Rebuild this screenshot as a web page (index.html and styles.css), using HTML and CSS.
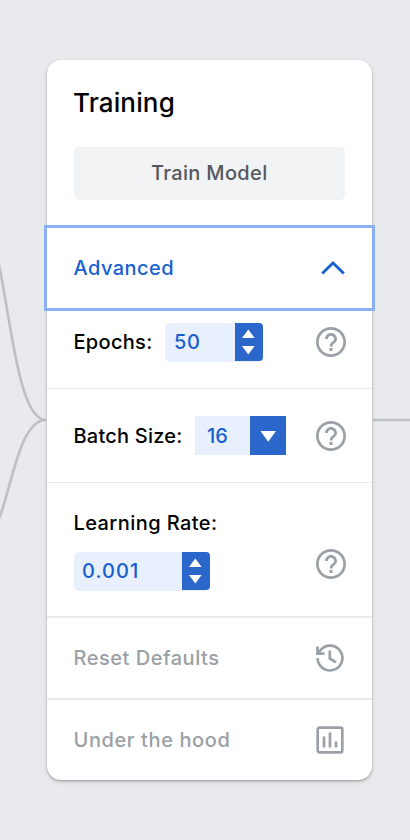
FILE: index.html
```html
<!DOCTYPE html>
<html lang="en">
<head>
<meta charset="utf-8">
<title>Training</title>
<link rel="stylesheet" href="styles.css">
</head>
<body>
<svg class="wires" viewBox="0 0 410 840" aria-hidden="true">
  <path d="M-4 250L0 270C12 330 20 420 46 420M46 420C20 420 12 485 0 516L-4 526M373 420H410"/>
</svg>
<svg class="defs" aria-hidden="true">
  <symbol id="help" viewBox="0 0 24 24"><path d="M11 18h2v-2h-2v2zm1-16C6.480 2 2 6.480 2 12s4.480 10 10 10 10-4.480 10-10S17.520 2 12 2zm0 18.200c-4.520 0-8.200-3.680-8.200-8.200S7.480 3.800 12 3.800s8.200 3.680 8.200 8.200-3.680 8.200-8.200 8.200zM12 6c-2.210 0-4 1.790-4 4h1.900c0-1.100.95-2.100 2.100-2.100s2.100 1 2.100 2.100c0 2-3 1.750-3 5h1.900c0-2.250 3-2.500 3-5 0-2.210-1.790-4-4-4z"/></symbol>
</svg>
<main class="card">
  <section class="head">
    <h1 class="title">Training</h1>
    <button class="train"><span>Train Model</span></button>
  </section>
  <section class="advanced">
    <span class="t-advanced">Advanced</span>
    <svg class="chevron" viewBox="0 0 24 14"><path d="M1.200 12.500L12 2L22.800 12.500"/></svg>
  </section>
  <section class="row epochs">
    <label class="t-epochs">Epochs:</label>
    <div class="field field-epochs"><span class="t-50">50</span>
      <svg class="stepper" viewBox="0 0 28 38"><path d="M7 15L13.300 6.500L19.600 15zM7 23L13.300 31.500L19.600 23z"/></svg>
    </div>
    <svg class="help"><use href="#help"/></svg>
  </section>
  <section class="row batch">
    <label class="t-batch">Batch Size:</label>
    <div class="field field-batch"><span class="t-16">16</span>
      <svg class="drop" viewBox="0 0 36 39"><path d="M10.500 15H26L18.200 25.800z"/></svg>
    </div>
    <svg class="help"><use href="#help"/></svg>
  </section>
  <section class="row rate">
    <div class="stack">
      <label class="t-rate">Learning Rate:</label>
      <div class="field field-rate"><span class="t-001">0.001</span>
        <svg class="stepper" viewBox="0 0 28 38"><path d="M7 15L13.300 6.500L19.600 15zM7 23L13.300 31.500L19.600 23z"/></svg>
      </div>
    </div>
    <svg class="help"><use href="#help"/></svg>
  </section>
  <section class="row link reset">
    <span class="t-reset">Reset Defaults</span>
    <svg class="icon" viewBox="0 0 30 30"><path d="M2.600 15A12.400 12.400 0 1 0 5 7.700L2.500 10.600M2.500 3.500V10.700H9.500M14.800 7.500V15.500L21 19.300"/></svg>
  </section>
  <section class="row link hood">
    <span class="t-hood">Under the hood</span>
    <svg class="icon" viewBox="0 0 30 30"><rect x="2.700" y="2.700" width="24.600" height="24.600" rx="1.500"/><path d="M9 11.500V22.500M15 7.500V22.500M21 16.500V22.500"/></svg>
  </section>
</main>
</body>
</html>
```
FILE: styles.css
```css
* { box-sizing: border-box; }
body {
  margin: 0;
  height: 840px;
  padding: 60px 38px 60px 47px;
  overflow: hidden;
  background: #e8eaed;
  font-family: Inter, "Liberation Sans", sans-serif;
  font-size: 20px;
  font-weight: 450;
  line-height: 24px;
  color: #000;
}
svg { display: block; flex: none; }
span, label, h1 { white-space: nowrap; }
.defs { position: absolute; width: 0; height: 0; }
.wires { position: absolute; left: 0; top: 0; width: 410px; height: 840px; fill: none; stroke: #bdc1c6; stroke-width: 2.600; }
.card {
  position: relative;
  width: 325px;
  height: 720px;
  border-radius: 14px;
  background: #fff;
  box-shadow: 0 1px 2px rgba(60,64,67,.35), 0 2px 4px rgba(60,64,67,.18);
}
.head { height: 165px; padding: 27px 27px 0 26.500px; }
.title { margin: 0 0 28px -.5px; font-size: 26px; line-height: 32px; font-weight: 450; letter-spacing: .15px; }
.train {
  display: flex; align-items: center; justify-content: center;
  width: 100%; height: 53px; padding: 0 0 2px;
  border: 0; border-radius: 5px;
  background: #f1f3f4; color: #55585d;
  font: inherit; letter-spacing: .35px;
}
.advanced {
  display: flex; align-items: center; justify-content: space-between;
  height: 86px; margin: 0 -3px; padding: 0 27px 0 26.500px;
  border: 3px solid #8ab0f3;
  color: #185fd0;
}
.t-advanced { letter-spacing: .450px; }
.chevron { width: 24px; height: 14px; fill: none; stroke: #185fd0; stroke-width: 2.800; }
.row { display: flex; align-items: center; padding: 0 23.500px 0 26.500px; border-bottom: 1.500px solid #e8eaed; }
.epochs { height: 78px; padding-bottom: 15px; }
.batch { height: 94px; }
.rate { height: 135px; border-bottom-width: 2px; }
.link { height: 82px; padding: 0 28px 0 26.500px; border-bottom-width: 2px; justify-content: space-between; color: #9aa0a6; }
.hood { height: 80px; border-bottom: 0; }
.t-epochs { width: 78.500px; letter-spacing: .300px; }
.t-batch { width: 108.500px; letter-spacing: .220px; }
.t-rate { letter-spacing: .420px; }
.t-reset { letter-spacing: .520px; }
.t-hood { letter-spacing: .600px; }
.field { display: flex; justify-content: space-between; height: 39px; border-radius: 5px; background: #e8f0fe; color: #185fd0; align-items: flex-start; line-height: 38px; }
.field-epochs { width: 98px; margin-left: 13px; padding-left: 9px; letter-spacing: .600px; }
.field-batch { width: 91px; margin-left: 13px; padding-left: 12px; border-radius: 0; line-height: 40px; }
.field-rate { width: 136px; padding-left: 8.500px; letter-spacing: 1.100px; }
.stepper { width: 28px; height: 38px; border-radius: 0 4px 4px 0; background: #2b66ca; fill: #fff; }
.drop { width: 36px; height: 39px; background: #2b66ca; fill: #fff; }
.help { width: 36px; height: 36px; margin-left: auto; fill: #9aa0a6; }
.stack { height: 100%; padding-top: 28px; }
.stack label { display: block; margin-bottom: 17px; }
.rate .help { margin-top: 29px; }
.icon { width: 30px; height: 30px; margin-right: -1px; fill: none; stroke: #9aa0a6; stroke-width: 2.700; }
```
